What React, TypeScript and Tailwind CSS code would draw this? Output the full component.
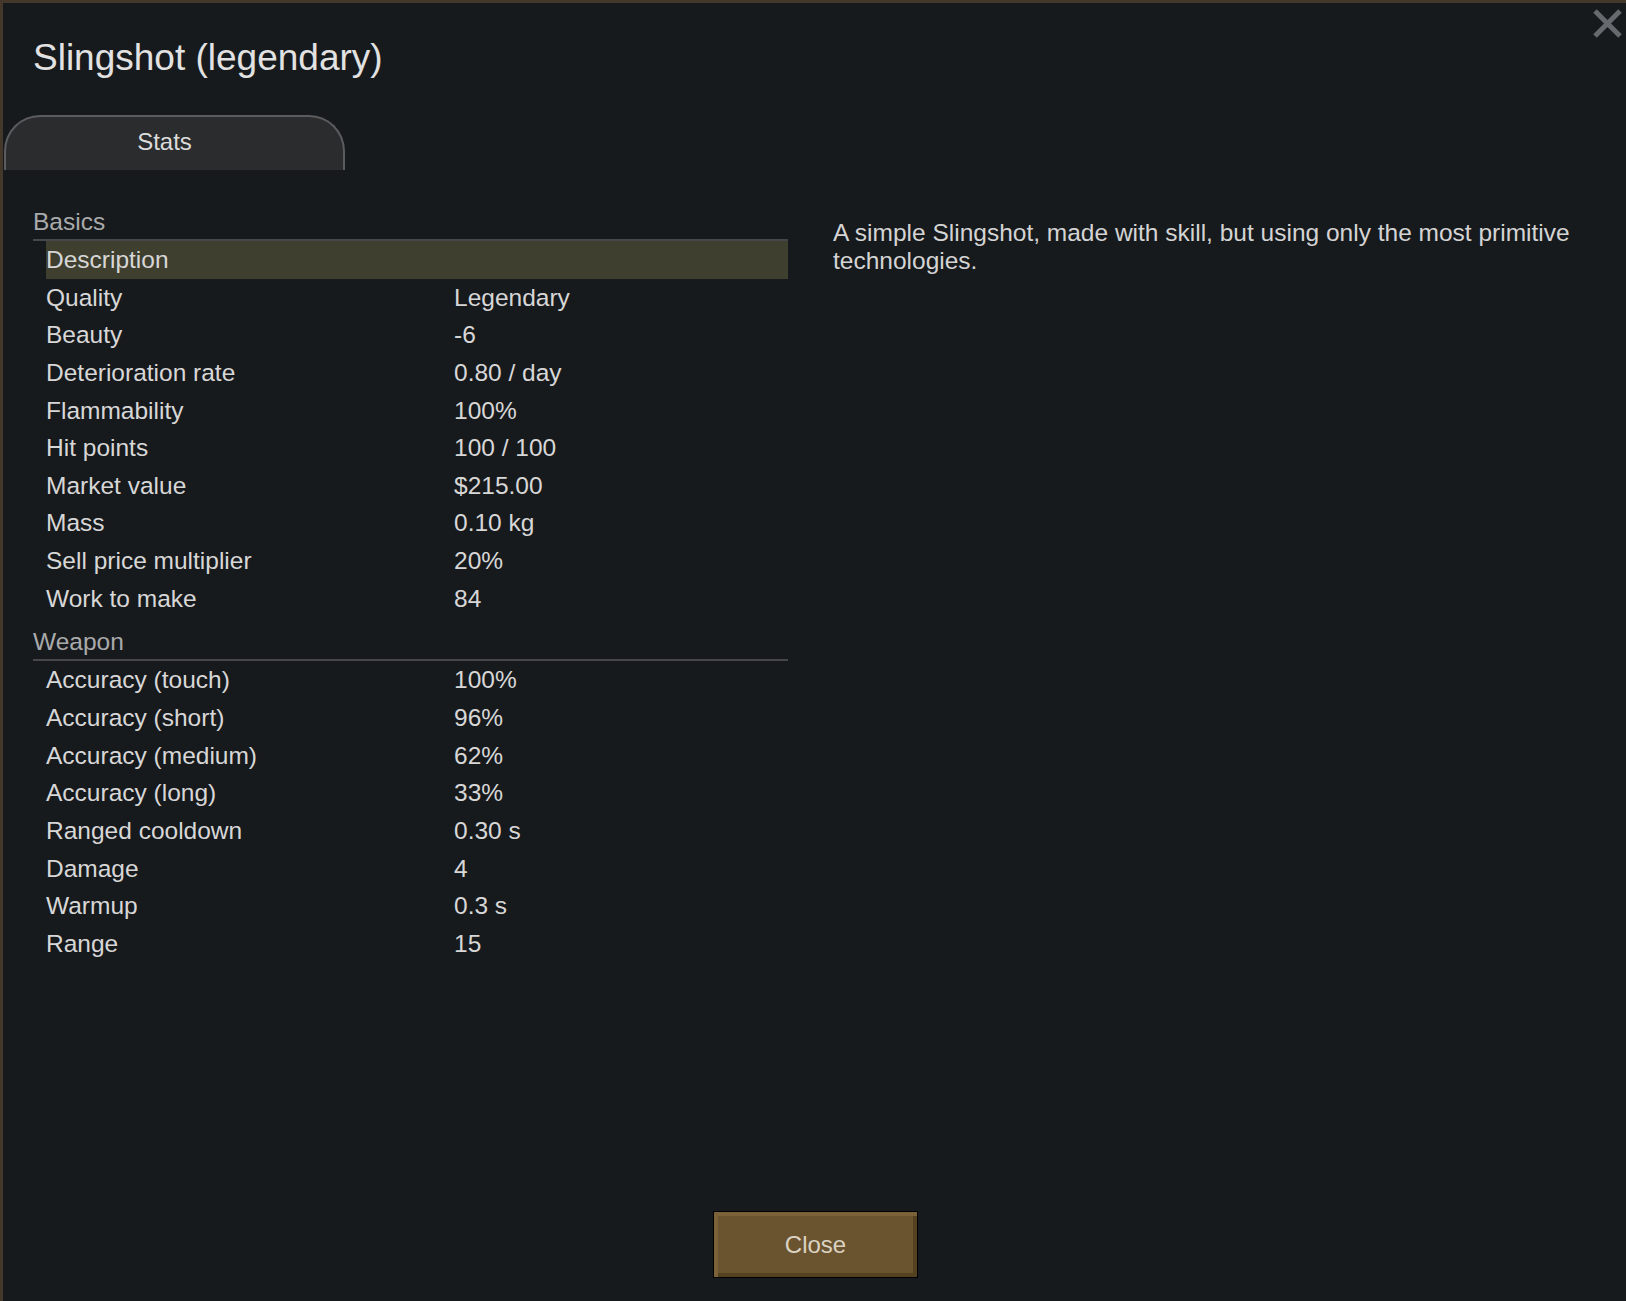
import React from 'react';

interface StatRow {
  label: string;
  value: string;
  highlight?: boolean;
}

interface Section {
  title: string;
  rows: StatRow[];
}

const sections: Section[] = [
  {
    title: 'Basics',
    rows: [
      { label: 'Description', value: '', highlight: true },
      { label: 'Quality', value: 'Legendary' },
      { label: 'Beauty', value: '-6' },
      { label: 'Deterioration rate', value: '0.80 / day' },
      { label: 'Flammability', value: '100%' },
      { label: 'Hit points', value: '100 / 100' },
      { label: 'Market value', value: '$215.00' },
      { label: 'Mass', value: '0.10 kg' },
      { label: 'Sell price multiplier', value: '20%' },
      { label: 'Work to make', value: '84' },
    ],
  },
  {
    title: 'Weapon',
    rows: [
      { label: 'Accuracy (touch)', value: '100%' },
      { label: 'Accuracy (short)', value: '96%' },
      { label: 'Accuracy (medium)', value: '62%' },
      { label: 'Accuracy (long)', value: '33%' },
      { label: 'Ranged cooldown', value: '0.30 s' },
      { label: 'Damage', value: '4' },
      { label: 'Warmup', value: '0.3 s' },
      { label: 'Range', value: '15' },
    ],
  },
];

export default function App() {
  return (
    <div
      className="relative w-[1626px] h-[1301px] bg-[#171a1d] border-t-[3px] border-l-[3px] border-[#43382a] flex flex-col text-[24.5px] text-[#d7d7d7]"
      style={{ fontFamily: '"Liberation Sans", Arial, sans-serif' }}
    >
      {/* Close icon */}
      <button className="absolute top-[5px] right-[3px] w-[31px] h-[31px]">
        <svg viewBox="0 0 31 31" className="w-full h-full">
          <path d="M3 3 L28 28 M28 3 L3 28" stroke="#666a6e" strokeWidth="5" />
        </svg>
      </button>

      {/* Title */}
      <h1 className="pl-[30px] pt-[37px] text-[37px] leading-[36px] text-[#e2e2e2]">Slingshot (legendary)</h1>

      {/* Tabs */}
      <div className="mt-[39px] pl-[1px]">
        <div className="w-[341px] h-[55px] flex items-center justify-center pr-[20px] pb-[3px] bg-[#2b2c2e] border-2 border-b-0 border-[#5b5c5e] rounded-t-[36px] text-[#dcdcdc] text-[24px]">
          Stats
        </div>
      </div>

      {/* Body */}
      <div className="flex mt-[28px] pl-[30px] flex-1">
        <div className="w-[755px]">
          {sections.map((section, i) => (
            <div key={section.title} className={i > 0 ? 'mt-[1px]' : ''}>
              <div className="pt-[6px] h-[43px] leading-[35px] text-[#a9aaab] border-b-2 border-[#45474b]">
                {section.title}
              </div>
              {section.rows.map((row) => (
                <div
                  key={row.label}
                  className={`ml-[13px] flex h-[37.65px] leading-[37.65px] ${row.highlight ? 'bg-[#3e3f2f]' : ''}`}
                >
                  <span className="w-[408px]">{row.label}</span>
                  <span>{row.value}</span>
                </div>
              ))}
            </div>
          ))}
        </div>

        <div className="ml-[45px] w-[770px] pt-[21px] leading-[27.5px] text-[#d4d4d4]">
          A simple Slingshot, made with skill, but using only the most primitive technologies.
        </div>
      </div>

      {/* Footer */}
      <div className="flex justify-center pb-[23px] pl-[2px]">
        <button className="w-[205px] h-[67px] border border-black bg-[#6a5430] shadow-[inset_4px_4px_0_#7b6239,inset_-4px_-4px_0_#54411f] text-[#dbd2c2] text-[24px]">
          Close
        </button>
      </div>
    </div>
  );
}
